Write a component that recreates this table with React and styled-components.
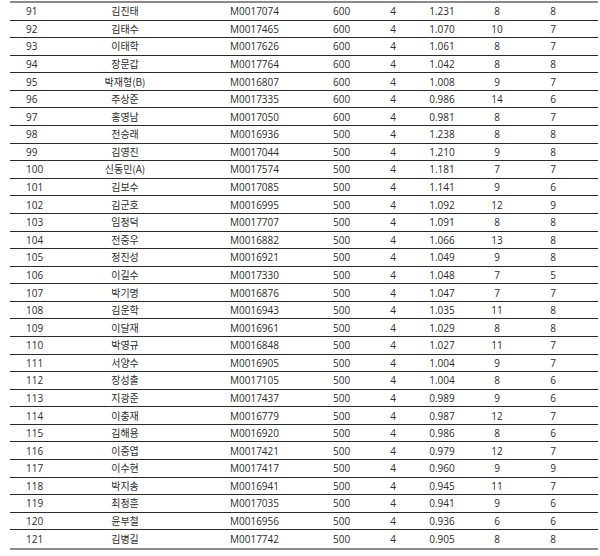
import React from "react";
import styled, { createGlobalStyle } from "styled-components";

const Global = createGlobalStyle`
  html, body { margin: 0; padding: 0; background: #fff; }
  body { font-family: "Open Sans", "Noto Sans CJK KR", sans-serif; }
`;

const rows = [
  [91, "김진태", "M0017074", 600, 4, "1.231", 8, 8],
  [92, "김태수", "M0017465", 600, 4, "1.070", 10, 7],
  [93, "이태학", "M0017626", 600, 4, "1.061", 8, 7],
  [94, "장문갑", "M0017764", 600, 4, "1.042", 8, 8],
  [95, "박재형(B)", "M0016807", 600, 4, "1.008", 9, 7],
  [96, "주상준", "M0017335", 600, 4, "0.986", 14, 6],
  [97, "홍영남", "M0017050", 600, 4, "0.981", 8, 7],
  [98, "전승래", "M0016936", 500, 4, "1.238", 8, 8],
  [99, "김영진", "M0017044", 500, 4, "1.210", 9, 8],
  [100, "신동민(A)", "M0017574", 500, 4, "1.181", 7, 7],
  [101, "김보수", "M0017085", 500, 4, "1.141", 9, 6],
  [102, "김군호", "M0016995", 500, 4, "1.092", 12, 9],
  [103, "임정덕", "M0017707", 500, 4, "1.091", 8, 8],
  [104, "전중우", "M0016882", 500, 4, "1.066", 13, 8],
  [105, "정진성", "M0016921", 500, 4, "1.049", 9, 8],
  [106, "이길수", "M0017330", 500, 4, "1.048", 7, 5],
  [107, "박기명", "M0016876", 500, 4, "1.047", 7, 7],
  [108, "김운학", "M0016943", 500, 4, "1.035", 11, 8],
  [109, "이달재", "M0016961", 500, 4, "1.029", 8, 8],
  [110, "박영규", "M0016848", 500, 4, "1.027", 11, 7],
  [111, "서양수", "M0016905", 500, 4, "1.004", 9, 7],
  [112, "장성출", "M0017105", 500, 4, "1.004", 8, 6],
  [113, "지광준", "M0017437", 500, 4, "0.989", 9, 6],
  [114, "이충재", "M0016779", 500, 4, "0.987", 12, 7],
  [115, "김해용", "M0016920", 500, 4, "0.986", 8, 6],
  [116, "이중엽", "M0017421", 500, 4, "0.979", 12, 7],
  [117, "이수현", "M0017417", 500, 4, "0.960", 9, 9],
  [118, "박지송", "M0016941", 500, 4, "0.945", 11, 7],
  [119, "최정훈", "M0017035", 500, 4, "0.941", 9, 6],
  [120, "윤부철", "M0016956", 500, 4, "0.936", 6, 6],
  [121, "김병길", "M0017742", 500, 4, "0.905", 8, 8],
];

const Wrap = styled.div`
  padding: 1px 2px 0 10px;
`;

const Table = styled.div`
  width: 588px;
  border-top: 2px solid #8a8a8a;
  border-bottom: 2px solid #8a8a8a;
`;

const Row = styled.div`
  display: grid;
  grid-template-columns: 52px 126px 130px 48px 54px 44px 66px 46px 1fr;
  align-items: center;
  height: 17.58px;
  box-sizing: border-box;
  border-bottom: ${(p) => (p.$last ? "none" : "1px solid #2a2a2a")};
  font-size: 10px;
  line-height: 1;
  color: #2b2b2b;
`;

const Cell = styled.div`
  text-align: ${(p) => p.$align || "center"};
  padding-left: ${(p) => p.$pl || 0}px;
  white-space: nowrap;
`;

const Name = styled(Cell)`
  font-family: "Noto Sans CJK KR", "Open Sans", sans-serif;
  font-size: 10px;
`;

export default function App() {
  return (
    <>
      <Global />
      <Wrap>
        <Table>
          {rows.map((r, i) => (
            <Row key={r[0]} $last={i === rows.length - 1}>
              <Cell $align="left" $pl={16}>{r[0]}</Cell>
              <Name>{r[1]}</Name>
              <Cell $align="left" $pl={42}>{r[2]}</Cell>
              <Cell $align="left" $pl={15}>{r[3]}</Cell>
              <Cell>{r[4]}</Cell>
              <Cell>{r[5]}</Cell>
              <Cell>{r[6]}</Cell>
              <Cell>{r[7]}</Cell>
              <Cell />
            </Row>
          ))}
        </Table>
      </Wrap>
    </>
  );
}
